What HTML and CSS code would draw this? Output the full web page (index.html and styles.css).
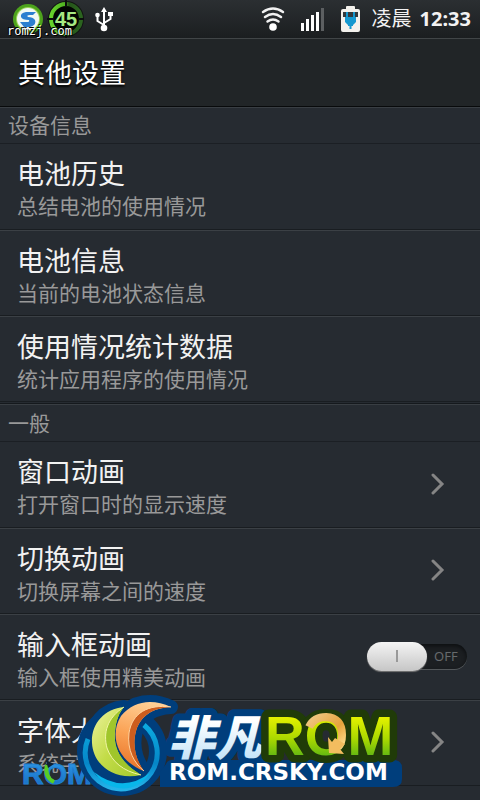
FILE: index.html
```html
<!DOCTYPE html>
<html lang="zh-CN">
<head>
<meta charset="utf-8">
<meta name="viewport" content="width=device-width, initial-scale=1">
<title>其他设置</title>
<link rel="stylesheet" href="styles.css">
</head>
<body>
<header class="status">
  <div class="status-left">
    <svg class="badges" width="72" height="38" viewBox="0 0 72 38" aria-hidden="true">
      <defs>
        <linearGradient id="ring" x1="0" y1="0" x2="1" y2="0"><stop offset="0" stop-color="#66d22c"/><stop offset=".45" stop-color="#51b322"/><stop offset=".6" stop-color="#26551a"/><stop offset="1" stop-color="#2b641f"/></linearGradient>
      </defs>
      <circle cx="16" cy="19" r="15" fill="#4da31c"/>
      <circle cx="16" cy="19" r="12" fill="#9ed45c"/>
      <circle cx="16" cy="19" r="11" fill="#f1f8f4"/>
      <path d="M24 12H14Q8 13 9 17Q10 20 17 20Q18 22 15 22H8L12 27H18Q25 25 23 20Q21 17 16 17Q14 15 18 15H21Z" fill="#2b7fd0"/>
      <circle cx="54" cy="19" r="18" fill="#111512"/>
      <circle cx="54" cy="19" r="15" fill="#020502" stroke="url(#ring)" stroke-width="4"/>
      <path d="M54 0V7M54 31V38M35 19H42M66 19H72" stroke="#0c0f0d" stroke-width="2"/>
      <text class="badge-number" x="54" y="26" text-anchor="middle">45</text>
    </svg>
    <svg width="18" height="26" viewBox="0 0 18 26" fill="none" stroke="#fff" stroke-width="2" aria-hidden="true">
      <path d="M9 22V4M9 19L2.500 15V9M9 17L15.500 13V7"/>
      <path d="M6 6L9 1L12 6Z" fill="#fff" stroke="none"/>
      <circle cx="9" cy="22" r="3.300" fill="#fff" stroke="none"/>
      <circle cx="2.500" cy="9" r="2.300" fill="#fff" stroke="none"/>
      <path d="M13 6H18V10H13Z" fill="#fff" stroke="none"/>
    </svg>
    <span class="site">romzj.com</span>
  </div>
  <div class="status-right">
    <svg width="24" height="26" viewBox="0 0 24 26" fill="none" stroke="#f2f2f2" stroke-width="2.400" stroke-linecap="round" aria-hidden="true">
      <path d="M2 6Q12-1 22 6M4 11Q12 5 20 11M6.500 15.500Q12 11.500 17.500 15.500"/>
      <circle cx="12" cy="21" r="3.800" fill="#fff" stroke="none"/>
    </svg>
    <svg width="24" height="26" viewBox="0 0 24 26" aria-hidden="true">
      <path d="M0 17H3V25H0ZM5 13H8V25H5ZM10 9H13V25H10ZM15 6H18V25H15Z" fill="#fff"/>
      <path d="M20 2H23V25H20Z" fill="#5c5f61"/>
    </svg>
    <svg width="19" height="26" viewBox="0 0 19 26" aria-hidden="true">
      <path d="M5 1Q5 0 6 0H13Q14 0 14 1V3H17Q19 3 19 5V24Q19 26 17 26H2Q0 26 0 24V5Q0 3 2 3H5Z" fill="#f3f1ec"/>
      <path d="M2 6H17V11H2Z" fill="#33393c"/>
      <path d="M5 6H7V11H12V6H14V11H15V16L12 19V20H10.500V23H8.500V20H7V19L4 16V11H5Z" fill="#1598cf"/>
    </svg>
    <span class="clock"><span>凌晨</span><b>12:33</b></span>
  </div>
</header>
<h1 class="title">其他设置</h1>
<main>
  <section class="group">
    <h2>设备信息</h2>
    <a class="row" href="#"><span class="text"><span class="name">电池历史</span><span class="note">总结电池的使用情况</span></span></a>
    <a class="row" href="#"><span class="text"><span class="name">电池信息</span><span class="note">当前的电池状态信息</span></span></a>
    <a class="row" href="#"><span class="text"><span class="name">使用情况统计数据</span><span class="note">统计应用程序的使用情况</span></span></a>
  </section>
  <section class="group">
    <h2>一般</h2>
    <a class="row" href="#"><span class="text"><span class="name">窗口动画</span><span class="note">打开窗口时的显示速度</span></span>
      <svg class="chevron" width="14" height="24" viewBox="0 0 14 24" aria-hidden="true"><path d="M2 3L11 12L2 21"/></svg></a>
    <a class="row" href="#"><span class="text"><span class="name">切换动画</span><span class="note">切换屏幕之间的速度</span></span>
      <svg class="chevron" width="14" height="24" viewBox="0 0 14 24" aria-hidden="true"><path d="M2 3L11 12L2 21"/></svg></a>
    <label class="row" for="input-animation"><span class="text"><span class="name">输入框动画</span><span class="note">输入框使用精美动画</span></span>
      <span class="switch"><input type="checkbox" id="input-animation"><span class="off">OFF</span></span></label>
    <a class="row" href="#"><span class="text"><span class="name">字体大小</span><span class="note">系统字体大小</span></span>
      <svg class="chevron" width="14" height="24" viewBox="0 0 14 24" aria-hidden="true"><path d="M2 3L11 12L2 21"/></svg></a>
  </section>
</main>
<svg class="watermark" width="390" height="108" viewBox="16 692 390 108">
  <defs>
    <linearGradient id="green" x1="0" y1="0" x2="1" y2="1"><stop offset="0" stop-color="#eef3a0"/><stop offset=".5" stop-color="#c3dc48"/><stop offset="1" stop-color="#a2c92c"/></linearGradient>
    <linearGradient id="orange" x1=".6" y1="0" x2=".4" y2="1"><stop offset="0" stop-color="#ffcf95"/><stop offset=".5" stop-color="#fba356"/><stop offset="1" stop-color="#e8742a"/></linearGradient>
    <linearGradient id="blue" x1="0" y1="0" x2="0" y2="1"><stop offset="0" stop-color="#0caadf"/><stop offset=".6" stop-color="#0586c8"/><stop offset="1" stop-color="#25b4ea"/></linearGradient>
    <linearGradient id="lime" x1="0" y1="0" x2="0" y2="1"><stop offset=".15" stop-color="#ecf500"/><stop offset=".55" stop-color="#a9d800"/><stop offset=".85" stop-color="#5cb414"/></linearGradient>
    <linearGradient id="ice" x1="0" y1="0" x2="0" y2="1"><stop offset=".3" stop-color="#fff"/><stop offset="1" stop-color="#b5ddf7"/></linearGradient>
    <linearGradient id="sky" x1="0" y1="0" x2="0" y2="1"><stop offset="0" stop-color="#2f9be8"/><stop offset="1" stop-color="#176bc0"/></linearGradient>
    <linearGradient id="gold" x1="0" y1="0" x2="1" y2="1"><stop offset="0" stop-color="#f0c884"/><stop offset=".6" stop-color="#e6a33c"/><stop offset="1" stop-color="#ffdc8a"/></linearGradient>
  </defs>
  <text class="mini" x="22" y="784">ROM</text>
  <path d="M47 765Q44 777 54 782" fill="none" stroke="#58ce25" stroke-width="4"/>
  <path d="M46 760L54 764L48 768Z" fill="#123"/>
  <g fill="none" stroke="#003e7c" stroke-linejoin="round">
    <circle cx="122" cy="751" r="36" stroke-width="18"/>
    <path d="M171 707C152 698 133 701 121 716C109 735 117 761 144 771C136 760 132 746 136 731C141 715 153 708 171 707ZM124 707C104 709 91 724 92 743C93 764 113 781 141 775C122 763 113 750 115 731C116 720 119 713 124 707Z" fill="#003e7c" stroke-width="14"/>
  </g>
  <path d="M88 739A36 36 0 1 0 144 725" fill="none" stroke="url(#blue)" stroke-width="5"/>
  <path d="M94 772Q122 794 150 773Q137 791 118 788Q102 785 94 772Z" fill="#08b6ea"/>
  <path d="M124 707C104 709 91 724 92 743C93 764 113 781 141 775C122 763 113 750 115 731C116 720 119 713 124 707Z" fill="url(#green)"/>
  <path d="M124 707C107 718 103 733 107 748C112 762 123 771 141 775C122 763 113 750 115 731C116 720 119 713 124 707Z" fill="#a0c62b"/>
  <path d="M124 707C107 718 103 733 107 748C112 762 123 771 141 775" fill="none" stroke="#f1f5a6" stroke-width="1"/>
  <path d="M171 707C152 698 133 701 121 716C109 735 117 761 144 771C136 760 132 746 136 731C141 715 153 708 171 707Z" fill="url(#orange)"/>
  <path d="M171 707C148 704 132 713 129 733C127 750 134 763 144 771C136 760 132 746 136 731C141 715 153 708 171 707Z" fill="#cc5d1e"/>
  <path d="M171 707C148 704 132 713 129 733C127 750 134 763 144 771" fill="none" stroke="#ffd3a0" stroke-width="1"/>
  <path class="plate" d="M166 764Q168 759 176 760H393Q402 760 402 768V779Q402 787 393 787H160V772Z"/>
  <text class="brand-outline" x="168" y="755">非凡</text>
  <text class="rom" x="265" y="755">ROM</text>
  <path d="M309 727Q314 717 326 717Q342 718 342 735Q342 743 338 747" fill="none" stroke="url(#gold)" stroke-width="8"/>
  <path d="M328 737L329 753L344 754L340 749L345 744L335 738L332 742Z" fill="#f3bd5f"/>
  <text class="domain" x="169" y="780">ROM.CRSKY.COM</text>
</svg>
</body>
</html>
```
FILE: styles.css
```css
* {
  box-sizing: border-box;
}

body {
  position: relative;
  margin: 0;
  min-height: 100vh;
  overflow-x: hidden;
  background: #262b31;
  color: #f2f2f2;
  font-family: "Noto Sans", "Noto Sans CJK SC", sans-serif;
}

svg {
  display: block;
  flex: none;
}

.status {
  display: flex;
  justify-content: space-between;
  height: 39px;
  padding-right: 9px;
  background: linear-gradient(#2b2f32, #1b1e20);
  border-bottom: 1px solid #414547;
}

.status-left {
  position: relative;
  display: flex;
  align-items: center;
  gap: 11px;
  padding-left: 12px;
}

.status-right {
  display: flex;
  align-items: center;
  gap: 16px;
}

.badge-number {
  font: bold 20px "Liberation Sans", sans-serif;
  fill: #a6e982;
}

.site {
  position: absolute;
  left: 7px;
  bottom: -1px;
  font: 12px/16px "DejaVu Sans Mono", monospace;
  color: #fff;
  text-shadow: 1px 1px #000, -1px -1px #000;
}

.clock {
  display: flex;
  gap: 8px;
  margin-left: -4px;
  font-size: 20px;
  line-height: 38px;
  white-space: nowrap;
}

.title {
  margin: 0;
  padding: 0 18px;
  border-bottom: 1px solid #080a0b;
  background: #212527;
  font-size: 27px;
  font-weight: 400;
  line-height: 67px;
  color: #fff;
  text-shadow: 0 2px 2px #000;
}

.group + .group {
  margin-top: 1px;
  border-top: 1px solid #15191d;
}

.group h2 {
  margin: 0;
  padding: 0 8px;
  border-top: 1px solid #393e43;
  border-bottom: 1px solid #1b1f24;
  font-size: 21px;
  font-weight: 400;
  line-height: 35px;
  color: #999;
}

.group + .group h2 {
  line-height: 36px;
}

.row {
  display: flex;
  align-items: center;
  justify-content: space-between;
  min-height: 86px;
  padding: 0 13px 2px 17px;
  border-bottom: 1px solid #191d21;
  color: inherit;
  text-decoration: none;
}

.row + .row {
  border-top: 1px solid #3b4045;
}

.text {
  display: grid;
  padding-top: 7px;
}

.name {
  font-size: 27px;
  line-height: 34px;
}

.note {
  font-size: 21px;
  line-height: 30px;
  color: #999;
}

.chevron {
  margin-right: 22px;
  fill: none;
  stroke: #858585;
  stroke-width: 3;
  stroke-linecap: round;
}

.switch {
  display: flex;
  align-items: center;
  width: 100px;
  height: 25px;
  border-radius: 13px;
  background: #1c1f22;
  box-shadow: inset 0 2px 4px #0c0e10, 0 1px #53575a;
}

.switch input {
  appearance: none;
  width: 60px;
  height: 29px;
  margin: 0;
  border-radius: 15px;
  background: linear-gradient(#999, #999) center / 2px 12px no-repeat, linear-gradient(#f4f4f4, #c6c6c6);
  box-shadow: 0 1px 1px #777;
}

.off {
  padding-left: 7px;
  font-size: 13px;
  line-height: 25px;
  color: #666a6c;
}

.watermark {
  position: absolute;
  left: 16px;
  top: 692px;
  pointer-events: none;
}

.mini {
  font: bold 30px "Liberation Sans", sans-serif;
  fill: url(#sky);
  stroke: #1f7fd2;
  stroke-width: 1px;
}

.plate {
  fill: #003e7c;
}

.brand-outline {
  font: italic 900 47px "Noto Sans CJK SC", sans-serif;
  fill: url(#ice);
  stroke: #003e7c;
  stroke-width: 14px;
  stroke-linejoin: round;
  paint-order: stroke;
}

.rom {
  font: bold 55px "Liberation Sans", sans-serif;
  fill: url(#lime);
  stroke: #203b08;
  stroke-width: 15px;
  stroke-linejoin: round;
  paint-order: stroke;
}

.domain {
  font: bold 23px "DejaVu Sans", sans-serif;
  fill: #fff;
}
```
